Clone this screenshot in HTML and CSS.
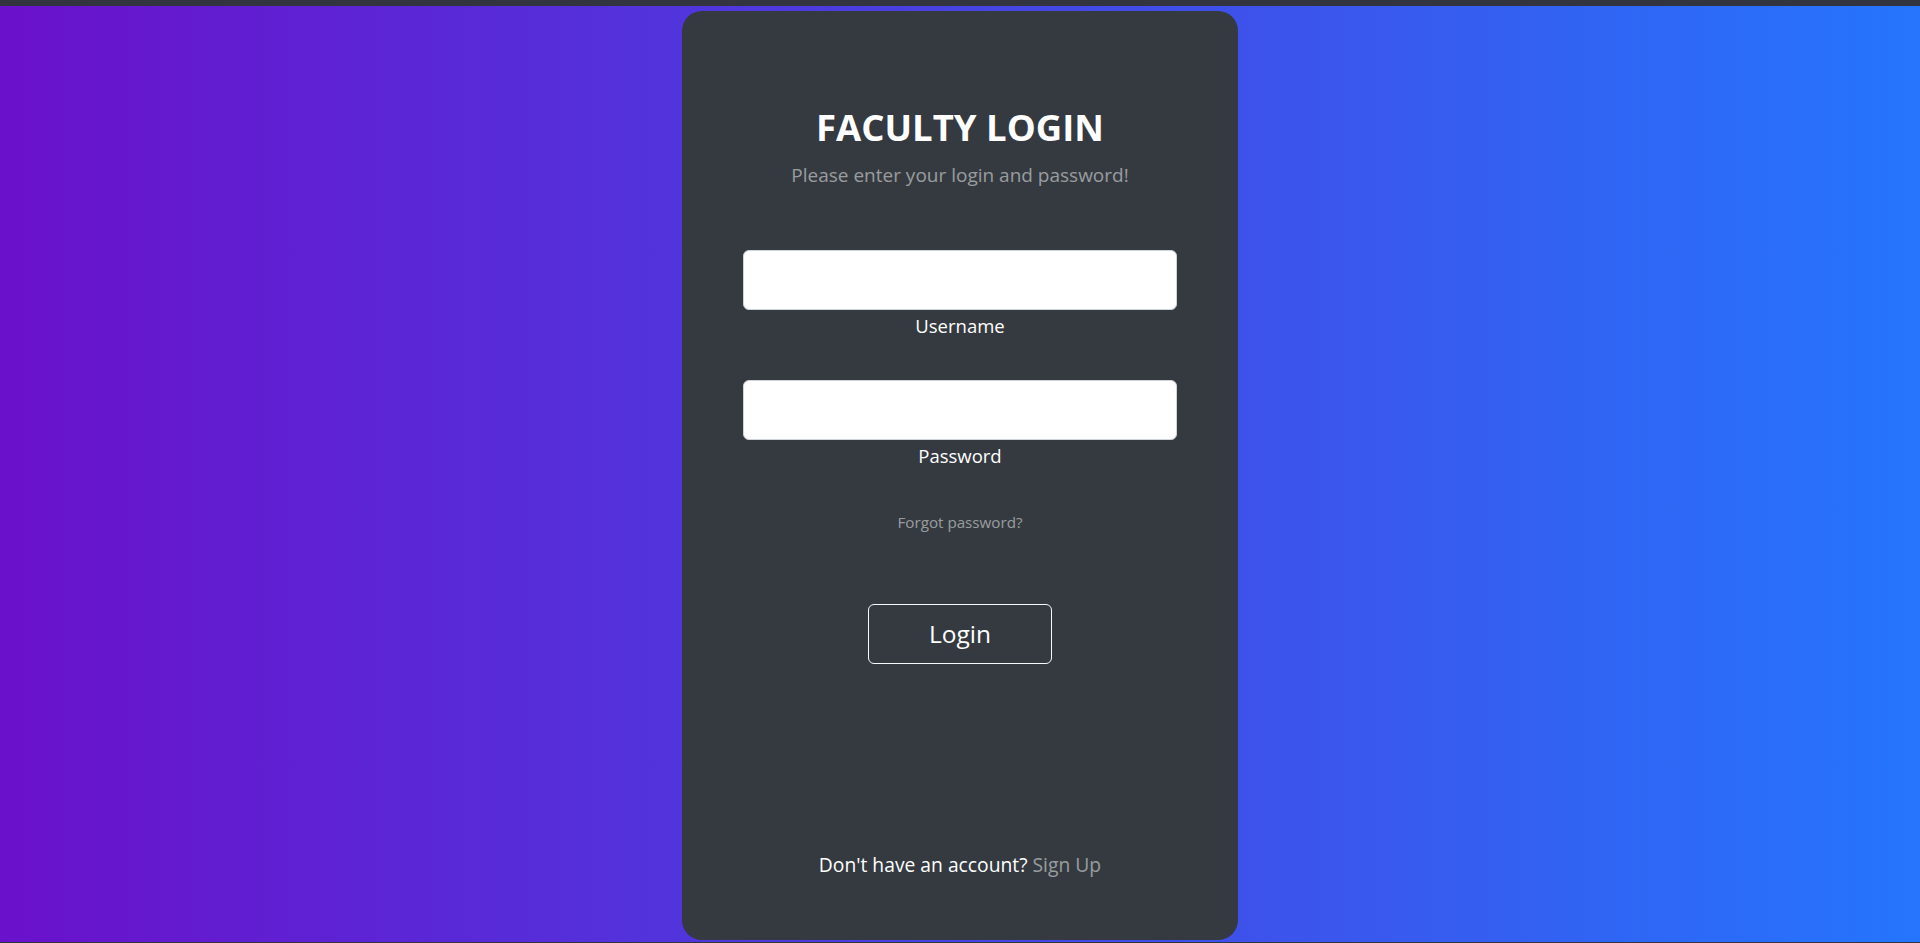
FILE: index.html
```html
<!DOCTYPE html>
<html lang="en">
<head>
<meta charset="utf-8">
<title>Faculty Login</title>
<link rel="stylesheet" href="styles.css">
</head>
<body>
<div class="topbar"></div>
<section class="gradient">
  <div class="card">
    <div class="card-main">
      <h2 class="title">FACULTY LOGIN</h2>
      <p class="subtitle">Please enter your login and password!</p>
      <div class="field">
        <input class="input" type="text" id="username">
        <label class="label" for="username">Username</label>
      </div>
      <div class="field field-last">
        <input class="input" type="password" id="password">
        <label class="label" for="password">Password</label>
      </div>
      <p class="forgot"><a href="#">Forgot password?</a></p>
      <button class="btn" type="submit">Login</button>
    </div>
    <p class="footer">Don't have an account? <a href="#">Sign Up</a></p>
  </div>
</section>
</body>
</html>
```
FILE: styles.css
```css
* { box-sizing: border-box; }
html, body { margin: 0; padding: 0; }
body {
  background: #32343f;
  font-family: "Open Sans", "Noto Sans", sans-serif;
  height: 943px;
  overflow: hidden;
}
.topbar { height: 6px; background: #32343f; }
.gradient {
  height: 936px;
  background: linear-gradient(to right, #6a11cb, #2575fc);
  display: flex;
  justify-content: center;
  padding-top: 5px;
}
.card {
  width: 556px;
  height: 929px;
  background: #343a40;
  border-radius: 20px;
  color: #fff;
  padding: 60px 61px;
  display: flex;
  flex-direction: column;
  text-align: center;
}
.card-main {
  padding-top: 31px;
  display: flex;
  flex-direction: column;
  align-items: stretch;
}
.title {
  margin: 1px 0 9px;
  font-size: 36.5px;
  line-height: 48px;
  font-weight: 700;
}
.subtitle {
  margin: 0 0 60px;
  font-size: 19px;
  line-height: 30px;
  color: rgba(255,255,255,0.5);
}
.field { margin-bottom: 39px; display: flex; flex-direction: column; }
.field-last { margin-bottom: 38px; }
.input {
  height: 60px;
  width: 100%;
  border: 1px solid #ced4da;
  border-radius: 6px;
  background: #fff;
  font-size: 25px;
  padding: 10px 20px;
}
.label {
  padding-top: 1px;
  font-size: 18.5px;
  line-height: 30px;
}
.forgot {
  margin: 0 0 69px;
  font-size: 15.2px;
  line-height: 26px;
}
.forgot a, .footer a { color: rgba(255,255,255,0.5); text-decoration: none; }
.btn {
  align-self: center;
  width: 184px;
  height: 60px;
  background: transparent;
  border: 1px solid #f8f9fa;
  border-radius: 6px;
  color: #fff;
  font-family: inherit;
  font-size: 24.5px;
  line-height: 36px;
}
.footer {
  margin: auto 0 0;
  font-size: 19.3px;
  line-height: 30px;
}
```
